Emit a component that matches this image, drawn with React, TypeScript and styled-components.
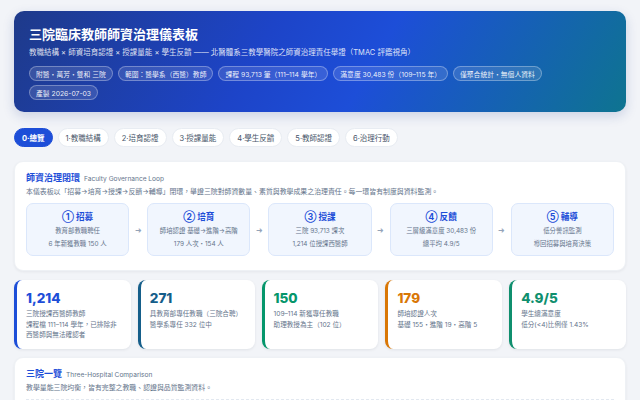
import { Fragment } from "react";
import styled, { createGlobalStyle } from "styled-components";

const Global = createGlobalStyle`
  html, body {
    margin: 0;
    padding: 0;
  }
  body {
    background-color: #f2f4f8;
    background-image: radial-gradient(rgba(148, 163, 184, 0.14) 0.6px, transparent 0.6px);
    background-size: 6px 6px;
    font-family: "Inter", "Noto Sans CJK TC", sans-serif;
    color: #1e293b;
  }
  * {
    box-sizing: border-box;
  }
`;

const Page = styled.div`
  width: 640px;
  height: 400px;
  overflow: hidden;
  padding: 11px 14px 0;
  display: flex;
  flex-direction: column;
`;

const Hero = styled.header`
  border-radius: 10px;
  padding: 14px 15px 12px;
  color: #fff;
  background: linear-gradient(120deg, #1e3a8a 0%, #1d44c8 40%, #1d4ed8 58%, #0e7490 100%);
  box-shadow: 0 4px 12px rgba(30, 58, 138, 0.18);
`;

const HeroTitle = styled.h1`
  margin: 0;
  font-size: 13px;
  line-height: 18px;
  font-weight: 700;
`;

const HeroSub = styled.p`
  margin: 4px 0 7px;
  font-size: 7.5px;
  line-height: 12px;
  color: rgba(255, 255, 255, 0.85);
`;

const ChipRow = styled.div<{ $spaced?: boolean }>`
  display: flex;
  flex-wrap: wrap;
  gap: 4px 5px;
  margin-top: ${(p) => (p.$spaced ? "4px" : "0")};
`;

const Chip = styled.span`
  display: inline-flex;
  align-items: center;
  height: 15px;
  padding: 0 6px;
  border-radius: 999px;
  font-size: 6.8px;
  color: rgba(255, 255, 255, 0.92);
  background: rgba(255, 255, 255, 0.12);
  border: 1px solid rgba(255, 255, 255, 0.3);
`;

const Tabs = styled.nav`
  display: flex;
  gap: 5px;
  margin: 16px 0 14px;
`;

const Tab = styled.button<{ $active?: boolean }>`
  height: 19px;
  padding: 0 7px;
  border-radius: 999px;
  border: 1px solid ${(p) => (p.$active ? "#1d4ed8" : "#e8ecf2")};
  background: ${(p) => (p.$active ? "#1d4ed8" : "#fff")};
  color: ${(p) => (p.$active ? "#fff" : "#475569")};
  font-family: inherit;
  font-size: 7.5px;
  font-weight: ${(p) => (p.$active ? 700 : 400)};
  cursor: pointer;
`;

const Card = styled.section`
  background: #fff;
  border-radius: 9px;
  padding: 9px 11px 14px;
  box-shadow: 0 1px 3px rgba(15, 23, 42, 0.06);
  border: 1px solid #eef1f5;
`;

const CardHead = styled.div`
  display: flex;
  align-items: baseline;
  gap: 4px;
`;

const CardTitle = styled.h2`
  margin: 0;
  font-size: 9px;
  line-height: 13px;
  font-weight: 700;
  color: #1d4ed8;
`;

const CardEn = styled.span`
  font-size: 6.6px;
  color: #64748b;
`;

const CardDesc = styled.p`
  margin: 2px 0 6px;
  font-size: 6.9px;
  line-height: 11px;
  color: #64748b;
`;

const Loop = styled.div`
  display: grid;
  grid-template-columns: 1fr 18px 1fr 18px 1fr 18px 1fr 18px 1fr;
  align-items: center;
`;

const Step = styled.div`
  height: 53px;
  border-radius: 7px;
  border: 1px solid #dbe7fb;
  background-color: #f1f6fe;
  background-image: radial-gradient(rgba(147, 180, 235, 0.25) 0.6px, transparent 0.6px);
  background-size: 4px 4px;
  display: flex;
  flex-direction: column;
  align-items: center;
  justify-content: center;
  gap: 3px;
`;

const StepTitle = styled.div`
  font-size: 8.6px;
  line-height: 12px;
  font-weight: 700;
  color: #1d4ed8;
`;

const StepLine = styled.div`
  font-size: 6.4px;
  line-height: 10px;
  color: #64748b;
`;

const Arrow = styled.span`
  text-align: center;
  font-size: 8px;
  color: #94a3b8;
`;

const Stats = styled.div`
  display: grid;
  grid-template-columns: repeat(5, 1fr);
  gap: 7px;
  margin: 9px 0 8px;
`;

const Stat = styled.div<{ $color: string }>`
  height: 69px;
  background: #fff;
  border-radius: 8px;
  border-left: 3px solid ${(p) => p.$color};
  box-shadow: 0 1px 3px rgba(15, 23, 42, 0.08);
  padding: 10px 10px 0 9px;
`;

const StatValue = styled.div<{ $color: string }>`
  font-size: 13.5px;
  line-height: 17px;
  font-weight: 800;
  color: ${(p) => p.$color};
  margin-bottom: 2px;
`;

const StatText = styled.div`
  font-size: 6.6px;
  line-height: 10.5px;
  color: #64748b;
`;

const Rule = styled.div`
  margin-top: 4px;
  border-top: 1px dashed #e2e8f0;
`;

const steps = [
  { t: "① 招募", a: "教育部教職聘任", b: "6 年新獲教職 150 人" },
  { t: "② 培育", a: "師培認證 基礎→進階→高階", b: "179 人次・154 人" },
  { t: "③ 授課", a: "三院 93,713 課次", b: "1,214 位授課西醫師" },
  { t: "④ 反饋", a: "三層級滿意度 30,483 份", b: "總平均 4.9/5" },
  { t: "⑤ 輔導", a: "低分警訊監測", b: "導回招募與培育決策" },
];

const stats = [
  { v: "1,214", c: "#1d4ed8", lines: ["三院授課西醫師教師", "課程檔 111–114 學年，已排除非", "西醫師與無法確認者"] },
  { v: "271", c: "#155e8a", lines: ["具教育部專任教職（三院合聘）", "醫學系專任 332 位中"] },
  { v: "150", c: "#05966b", lines: ["109–114 新獲專任教職", "助理教授為主（102 位）"] },
  { v: "179", c: "#d97706", lines: ["師培認證人次", "基礎 155・進階 19・高階 5"] },
  { v: "4.9/5", c: "#0f8f6e", lines: ["學生總滿意度", "低分(<4)比例僅 1.43%"] },
];

const tabs = ["0·總覽", "1·教職結構", "2·培育認證", "3·授課量能", "4·學生反饋", "5·教師認證", "6·治理行動"];

const App = () => {
  return (
    <>
      <Global />
      <Page>
        <Hero>
          <HeroTitle>三院臨床教師師資治理儀表板</HeroTitle>
          <HeroSub>
            教職結構 × 師資培育認證 × 授課量能 × 學生反饋 —— 北醫體系三教學醫院之師資治理責任舉證（TMAC 評鑑視角）
          </HeroSub>
          <ChipRow>
            <Chip>附醫・萬芳・雙和 三院</Chip>
            <Chip>範圍：醫學系（西醫）教師</Chip>
            <Chip>課程 93,713 筆（111–114 學年）</Chip>
            <Chip>滿意度 30,483 份（109–115 年）</Chip>
            <Chip>僅聚合統計・無個人資料</Chip>
          </ChipRow>
          <ChipRow $spaced>
            <Chip>產製 2026-07-03</Chip>
          </ChipRow>
        </Hero>

        <Tabs>
          {tabs.map((t, i) => (
            <Tab key={t} $active={i === 0}>
              {t}
            </Tab>
          ))}
        </Tabs>

        <Card>
          <CardHead>
            <CardTitle>師資治理閉環</CardTitle>
            <CardEn>Faculty Governance Loop</CardEn>
          </CardHead>
          <CardDesc>
            本儀表板以「招募→培育→授課→反饋→輔導」閉環，舉證三院對師資數量、素質與教學成果之治理責任。每一環皆有制度與資料監測。
          </CardDesc>
          <Loop>
            {steps.map((s, i) => (
              <Fragment key={s.t}>
                {i > 0 && <Arrow>➜</Arrow>}
                <Step>
                  <StepTitle>{s.t}</StepTitle>
                  <StepLine>{s.a}</StepLine>
                  <StepLine>{s.b}</StepLine>
                </Step>
              </Fragment>
            ))}
          </Loop>
        </Card>

        <Stats>
          {stats.map((s) => (
            <Stat key={s.v} $color={s.c}>
              <StatValue $color={s.c}>{s.v}</StatValue>
              {s.lines.map((l) => (
                <StatText key={l}>{l}</StatText>
              ))}
            </Stat>
          ))}
        </Stats>

        <Card>
          <CardHead>
            <CardTitle>三院一覽</CardTitle>
            <CardEn>Three-Hospital Comparison</CardEn>
          </CardHead>
          <CardDesc>教學量能三院均衡，皆有完整之教職、認證與品質監測資料。</CardDesc>
          <Rule />
        </Card>
      </Page>
    </>
  );
};

export default App;
